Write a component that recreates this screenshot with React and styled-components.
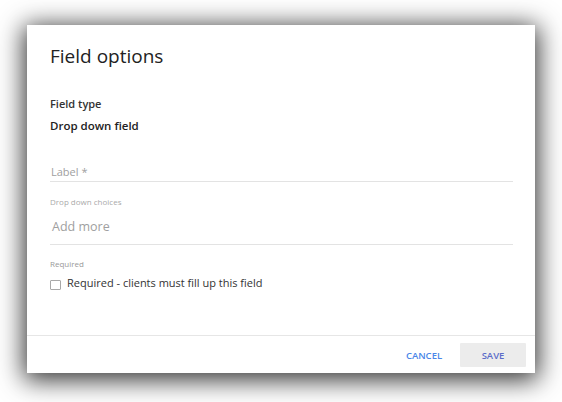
import React from "react";
import styled, { createGlobalStyle } from "styled-components";

const Global = createGlobalStyle`
  html, body { margin: 0; padding: 0; background: #ffffff; }
  body { font-family: "Open Sans", "Liberation Sans", sans-serif; }
  * { box-sizing: border-box; }
`;

const Stage = styled.div`
  width: 562px;
  height: 402px;
  padding: 25px 0 0 27px;
  overflow: hidden;
`;

const Dialog = styled.div`
  width: 508px;
  height: 348px;
  background: #ffffff;
  box-shadow: 0 4px 24px 3px rgba(0, 0, 0, 0.8);
  display: flex;
  flex-direction: column;
`;

const Body = styled.div`
  flex: 1;
  padding: 18px 22px 0 23px;
  display: flex;
  flex-direction: column;
`;

const Title = styled.h2`
  margin: 0;
  font-size: 19px;
  line-height: 26px;
  font-weight: 400;
  color: #222;
`;

const Caption = styled.div`
  margin-top: ${(p) => p.$mt}px;
  font-size: ${(p) => p.$size}px;
  line-height: ${(p) => p.$lh}px;
  font-weight: ${(p) => p.$weight || 400};
  color: ${(p) => p.$color};
`;

const Field = styled.div`
  margin-top: ${(p) => p.$mt}px;
  padding: 0 0 ${(p) => p.$pb}px ${(p) => p.$pl}px;
  border-bottom: 1px solid #e3e3e3;
  font-size: ${(p) => p.$size}px;
  line-height: ${(p) => p.$lh}px;
  color: #a0a0a0;
`;

const CheckRow = styled.label`
  margin-top: 6px;
  display: flex;
  align-items: center;
  gap: 6px;
  font-size: 11px;
  line-height: 16px;
  color: #333;
`;

const Box = styled.span`
  width: 11px;
  height: 10px;
  margin-top: 3px;
  border: 1px solid #a8a8a8;
  border-radius: 1px;
  background: #fff;
  flex: none;
`;

const Footer = styled.div`
  border-top: 1px solid #e6e6e6;
  padding: 7px 9px 6px 0;
  display: flex;
  justify-content: flex-end;
  align-items: center;
  gap: 11px;
`;

const Button = styled.button`
  height: 24px;
  width: ${(p) => p.$w}px;
  border: none;
  border-radius: 1px;
  background: ${(p) => (p.$filled ? "#ececec" : "transparent")};
  color: ${(p) => p.$color};
  font-family: "Open Sans", "Liberation Sans", sans-serif;
  font-size: 9.5px;
  font-weight: 600;
  padding: 0;
  cursor: pointer;
`;

export default function App() {
  return (
    <>
      <Global />
      <Stage>
        <Dialog>
          <Body>
            <Title>Field options</Title>
            <Caption $mt={27} $size={11} $lh={16} $weight={600} $color="#333">
              Field type
            </Caption>
            <Caption $mt={5} $size={11.5} $lh={18} $weight={600} $color="#222">
              Drop down field
            </Caption>
            <Field $mt={29} $size={11} $lh={16} $pb={1} $pl={1}>
              Label *
            </Field>
            <Caption $mt={14} $size={8} $lh={11} $color="#aaa">
              Drop down choices
            </Caption>
            <Field $mt={11} $size={12.5} $lh={18} $pb={8} $pl={2}>
              Add more
            </Field>
            <Caption $mt={13} $size={8} $lh={11} $color="#999">
              Required
            </Caption>
            <CheckRow>
              <Box />
              Required - clients must fill up this field
            </CheckRow>
          </Body>
          <Footer>
            <Button $w={50} $color="#4a86e8">CANCEL</Button>
            <Button $w={66} $filled $color="#5b6cc9">SAVE</Button>
          </Footer>
        </Dialog>
      </Stage>
    </>
  );
}
